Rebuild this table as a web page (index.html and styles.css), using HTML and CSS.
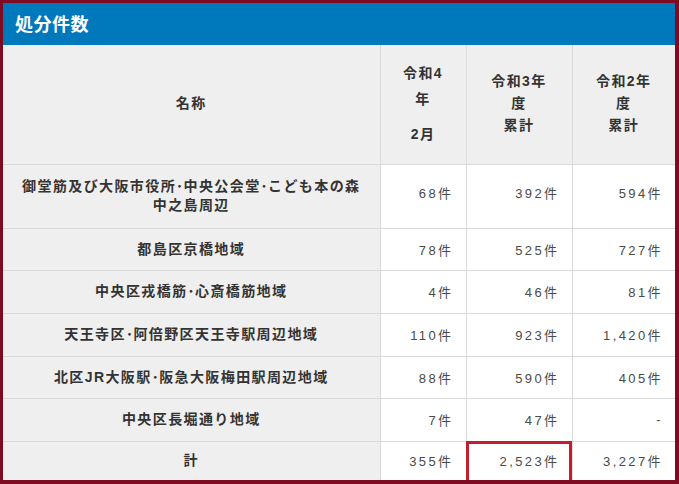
FILE: index.html
```html
<!DOCTYPE html>
<html lang="ja">
<head>
<meta charset="utf-8">
<link rel="stylesheet" href="styles.css">
</head>
<body>
<div class="frame">
  <h2 class="title">処分件数</h2>
  <table class="tbl">
    <colgroup>
      <col class="c-name"><col class="c-a"><col class="c-b"><col class="c-c">
    </colgroup>
    <thead>
      <tr class="r-head">
        <th>名称</th>
        <th><span class="ln l1">令和4</span><span class="ln l1">年</span><span class="ln l1 gap">2月</span></th>
        <th><span class="ln">令和3年</span><span class="ln">度</span><span class="ln">累計</span></th>
        <th><span class="ln">令和2年</span><span class="ln">度</span><span class="ln">累計</span></th>
      </tr>
    </thead>
    <tbody>
      <tr class="r-tall">
        <th>御堂筋及び大阪市役所<span class="dot">･</span>中央公会堂<span class="dot">･</span>こども本の森<br>中之島周辺</th>
        <td>68件</td><td>392件</td><td>594件</td>
      </tr>
      <tr class="r-42"><th>都島区京橋地域</th><td>78件</td><td>525件</td><td>727件</td></tr>
      <tr class="r-43"><th>中央区戎橋筋<span class="dot">･</span>心斎橋筋地域</th><td>4件</td><td>46件</td><td>81件</td></tr>
      <tr class="r-43"><th>天王寺区<span class="dot">･</span>阿倍野区天王寺駅周辺地域</th><td>110件</td><td>923件</td><td>1,420件</td></tr>
      <tr class="r-42"><th>北区JR大阪駅<span class="dot">･</span>阪急大阪梅田駅周辺地域</th><td>88件</td><td>590件</td><td>405件</td></tr>
      <tr class="r-43"><th>中央区長堀通り地域</th><td>7件</td><td>47件</td><td>-</td></tr>
      <tr class="r-last"><th>計</th><td>355件</td><td class="hl">2,523件</td><td>3,227件</td></tr>
    </tbody>
  </table>
</div>
</body>
</html>
```

FILE: styles.css
```css
html, body {
  margin: 0;
  padding: 0;
  background: #ffffff;
}
body {
  width: 679px;
  height: 484px;
  overflow: hidden;
  font-family: "Liberation Sans", "Noto Sans CJK JP", sans-serif;
}
.frame {
  box-sizing: border-box;
  width: 679px;
  height: 484px;
  border-style: solid;
  border-color: #7e0b22;
  border-width: 3px 4px 4px 3px;
  background: #ffffff;
  overflow: hidden;
}
.title {
  margin: 0;
  height: 42px;
  background: #0079bc;
  color: #ffffff;
  font-size: 18px;
  font-weight: bold;
  line-height: 40px;
  padding-left: 12px;
  letter-spacing: 0.5px;
  font-family: "Noto Sans CJK JP", sans-serif;
}
.tbl {
  border-collapse: collapse;
  width: 672px;
  table-layout: fixed;
  font-size: 14px;
  letter-spacing: 1.4px;
  color: #333333;
}
.c-name { width: 377px; }
.c-a { width: 86px; }
.c-b { width: 106px; }
.c-c { width: 103px; }
.tbl th, .tbl td {
  border: 1px solid #dadada;
}
.tbl tr > :first-child { border-left: none; }
.tbl tr > :last-child { border-right: none; }
.tbl thead th { border-top: none; }
.tbl tbody tr:last-child > * { border-bottom: none; }
.tbl th {
  background: #efefef;
  font-weight: bold;
  text-align: center;
  color: #333333;
  line-height: 19px;
  padding: 0 6px;
}
.tbl td {
  background: #ffffff;
  text-align: right;
  color: #4a4a4a;
  font-size: 13px;
  letter-spacing: 2.4px;
  padding: 0 12px 0 8px;
  vertical-align: middle;
}
.dot { letter-spacing: 0.5px; }
.r-head { height: 119px; }
.r-head th { padding-top: 0; padding-bottom: 2px; }
.ln {
  display: block;
  line-height: 22px;
}
.l1 { line-height: 26px; }
.gap { margin-top: 9px; }
.r-tall { height: 64px; }
.r-tall td { vertical-align: top; padding-top: 18px; }
.r-42 { height: 42px; }
.r-43 { height: 43px; }
.r-last { height: 39px; }
.hl { position: relative; }
.hl::after {
  content: "";
  position: absolute;
  left: -1px;
  right: 0;
  top: -1px;
  bottom: -3px;
  border: 3px solid #c41e2e;
}
```
